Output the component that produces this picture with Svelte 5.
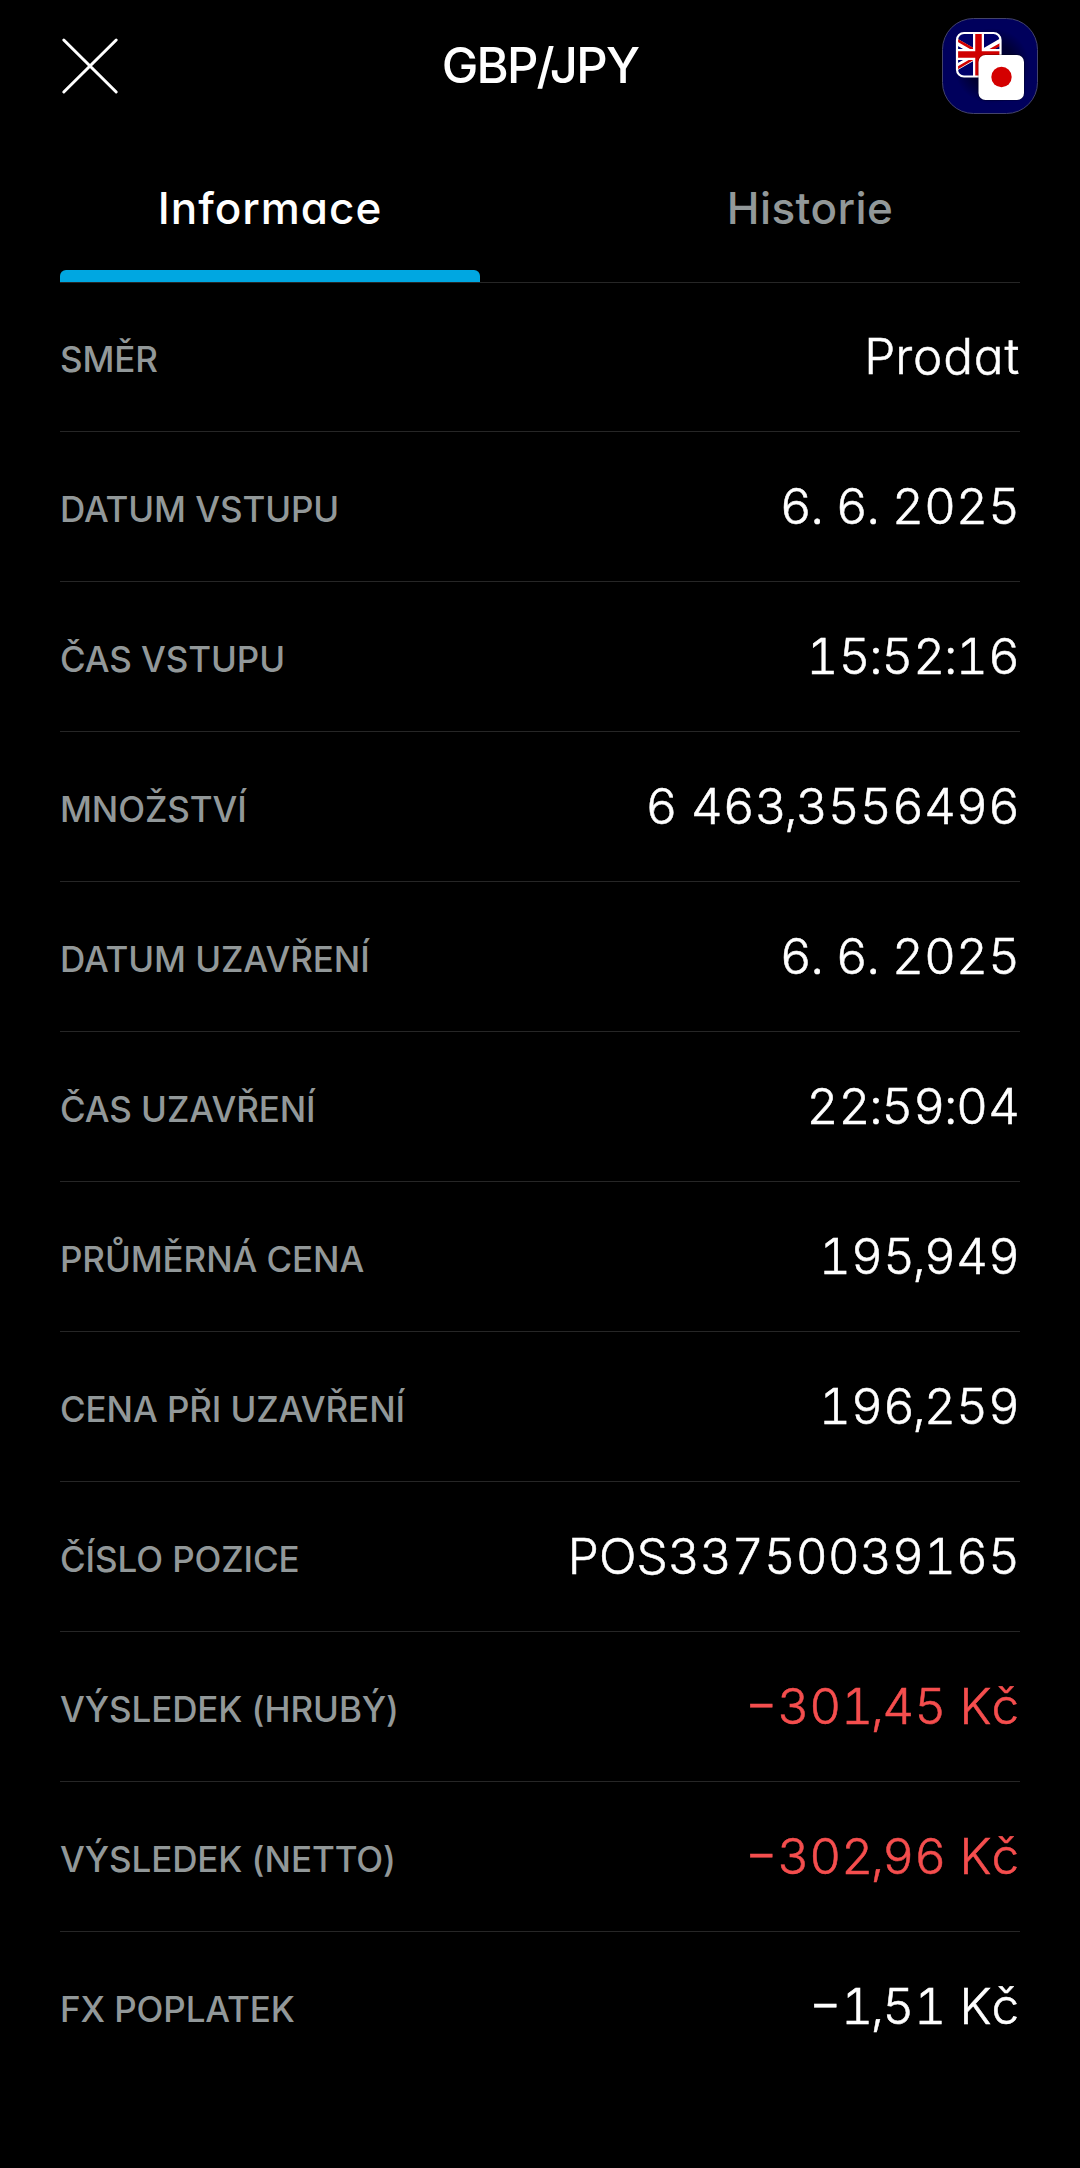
<script lang="ts">
    interface Row {
        label: string;
        value: string;
        loss?: boolean;
    }

    const rows: Row[] = [
        { label: "SMĚR", value: "Prodat" },
        { label: "DATUM VSTUPU", value: "6. 6. 2025" },
        { label: "ČAS VSTUPU", value: "15:52:16" },
        { label: "MNOŽSTVÍ", value: "6 463,3556496" },
        { label: "DATUM UZAVŘENÍ", value: "6. 6. 2025" },
        { label: "ČAS UZAVŘENÍ", value: "22:59:04" },
        { label: "PRŮMĚRNÁ CENA", value: "195,949" },
        { label: "CENA PŘI UZAVŘENÍ", value: "196,259" },
        { label: "ČÍSLO POZICE", value: "POS33750039165" },
        { label: "VÝSLEDEK (HRUBÝ)", value: "−301,45 Kč", loss: true },
        { label: "VÝSLEDEK (NETTO)", value: "−302,96 Kč", loss: true },
        { label: "FX POPLATEK", value: "−1,51 Kč" },
    ];

    const tabs = ["Informace", "Historie"];
    let active = "Informace";

    // separators are set tighter than the digits, words a bit looser
    const split = (value: string) => value.split(/([.,:]|[a-zč]+)/).filter((part) => part);
    const isSeparator = (part: string) => /^[.:]$/.test(part);
    const isWord = (part: string) => /^[a-zč]+$/.test(part);
</script>

<div class="screen">
    <header>
        <button class="close" aria-label="Zavřít">
            <svg width="60" height="60" viewBox="0 0 60 60">
                <path d="M3.8 4 L56.2 56 M56.2 4 L3.8 56" />
            </svg>
        </button>
        <h1>GBP/JPY</h1>
        <svg class="pair" width="96" height="96" viewBox="0 0 96 96">
            <defs>
                <clipPath id="gb">
                    <rect x="15" y="15" width="43.5" height="43.5" rx="7" />
                </clipPath>
                <radialGradient id="navy">
                    <stop offset="0.6" stop-color="#000033" />
                    <stop offset="1" stop-color="#00005c" />
                </radialGradient>
            </defs>
            <rect x="0.5" y="0.5" width="95" height="95" rx="31" fill="#00005c" stroke="#43436a" />
            <circle cx="50" cy="48" r="38" fill="url(#navy)" />
            <g clip-path="url(#gb)">
                <rect x="14" y="14" width="45" height="45" fill="#00006a" />
                <path d="M8 20 L65 53 M8 53 L65 20" stroke="#fff" stroke-width="6" />
                <path d="M36 39 L65 22.5 M36 38 L7 55 M8 18 L36 34" stroke="#d00000" stroke-width="2.6" />
                <path d="M36.5 14 V59 M14 36.5 H59" stroke="#fff" stroke-width="11" />
                <path d="M36.5 14 V59 M14 36.5 H59" stroke="#d00000" stroke-width="6.5" />
            </g>
            <rect x="15" y="15" width="43.5" height="43.5" rx="7" fill="none" stroke="#fff" stroke-width="2.2" />
            <rect x="35.7" y="36.2" width="47.1" height="46.6" rx="8" fill="#000" opacity="0.3" />
            <rect x="36.5" y="37" width="45.5" height="45" rx="7" fill="#fff" />
            <circle cx="59.5" cy="59" r="10.2" fill="#d40000" />
        </svg>
    </header>

    <nav>
        {#each tabs as tab}
            <button class="tab" class:active={tab === active} on:click={() => (active = tab)}>
                <span>{tab}</span>
            </button>
        {/each}
    </nav>

    <dl>
        {#each rows as row}
            <div class="row">
                <dt>{row.label}</dt>
                <dd class:loss={row.loss}>{#each split(row.value) as part}<span class:separator={isSeparator(part)} class:comma={part === ","} class:word={isWord(part)}>{part}</span>{/each}</dd>
            </div>
        {/each}
    </dl>
</div>

<style>
    :global(body) {
        background: #000;
    }

    .screen {
        width: 1080px;
        height: 2168px;
        box-sizing: border-box;
        background: #000;
        color: #fff;
        font-family: Inter, "Liberation Sans", sans-serif;
        font-feature-settings: "cv11";
        overflow: hidden;
    }

    button {
        background: none;
        border: 0;
        padding: 0;
        color: inherit;
        font: inherit;
        font-feature-settings: inherit;
    }

    /* Header */
    header {
        height: 132px;
        padding: 0 42px 0 60px;
        display: grid;
        grid-template-columns: 96px 1fr 96px;
        align-items: center;
        box-sizing: border-box;
    }

    .close {
        width: 60px;
        height: 60px;
    }

    .close path {
        stroke: #fff;
        stroke-width: 3;
        stroke-linecap: round;
    }

    h1 {
        margin: 0 0 0 -18px;
        font-size: 49px;
        line-height: 60px;
        font-weight: 500;
        letter-spacing: -1.8px;
        text-align: center;
    }

    /* Tabs */
    nav {
        height: 150px;
        display: grid;
        grid-template-columns: 1fr 1fr;
    }

    .tab {
        display: flex;
        flex-direction: column;
        align-items: center;
        justify-content: space-between;
        padding-top: 46px;
        box-sizing: border-box;
        font-size: 44px;
        line-height: 60px;
        font-weight: 500;
        letter-spacing: 0.4px;
        color: #929899;
    }

    .tab.active {
        color: #fff;
        letter-spacing: 1px;
    }

    .tab.active::after {
        content: "";
        width: 420px;
        height: 12px;
        border-radius: 6px 6px 0 0;
        background: #00a7e1;
    }

    /* Rows */
    dl {
        margin: 0 60px;
        border-top: 1px solid #262626;
    }

    .row {
        height: 150px;
        display: flex;
        justify-content: space-between;
        align-items: flex-start;
        padding-top: 41px;
        box-sizing: border-box;
        border-bottom: 1px solid #262626;
    }

    .row:first-child {
        height: 149px;
        padding-top: 40px;
    }

    .row:last-child {
        border-bottom: 0;
    }

    dt {
        padding-top: 6px;
        font-size: 35px;
        line-height: 60px;
        font-weight: 500;
        letter-spacing: -0.1px;
        color: #929899;
    }

    dd {
        margin: 0;
        font-size: 49.5px;
        line-height: 66px;
        font-weight: 300;
        font-feature-settings: "cv11", "tnum";
        -webkit-text-stroke: 0.5px currentColor;
        white-space: pre;
    }

    .separator {
        margin-left: -1.3px;
        letter-spacing: -1.3px;
    }

    .comma {
        margin-left: -2.6px;
        letter-spacing: -1.8px;
    }

    .word {
        letter-spacing: 0.8px;
    }

    .loss {
        color: #f54e4e;
    }
</style>
